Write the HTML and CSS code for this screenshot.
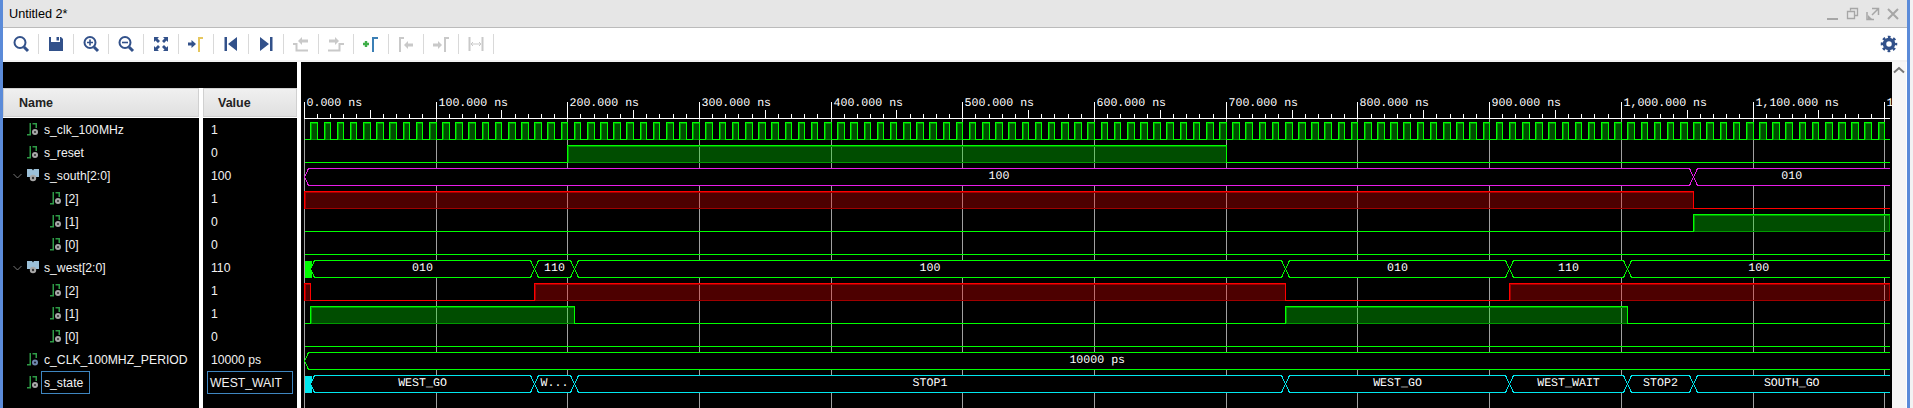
FILE: index.html
```html
<!DOCTYPE html>
<html lang="en">
<head>
    <meta charset="UTF-8">
    <title>Untitled 2*</title>
    <link rel="stylesheet" href="styles.css">
</head>
<body>

    <svg class="defs" width="0" height="0">
        <symbol id="sig" viewBox="0 0 12 15">
            <path d="M0 12h2.500V1H4v12.500H0z" fill="#2e9a46"/>
            <path d="M5.500 1H10v5H8.500V2.500h-3z" fill="#2e9a46"/>
            <circle cx="8" cy="10" r="3" fill="#a8a8a8"/>
            <circle cx="8" cy="10" r="1.100" fill="#333"/>
        </symbol>
        <symbol id="const" viewBox="0 0 12 15">
            <path d="M0 12h2.500V1H4v12.500H0z" fill="#2e9a46"/>
            <path d="M5.500 1H10v5H8.500V2.500h-3z" fill="#2e9a46"/>
            <circle cx="8" cy="10.500" r="3" fill="#6f86ad"/>
            <circle cx="8" cy="10.500" r="1.100" fill="#223"/>
        </symbol>
        <symbol id="bus" viewBox="0 0 12 15">
            <path d="M0 1h5l1 1.500L7 1h5v8H9v2H3V9H0z" fill="#9cc0d8"/>
            <circle cx="6" cy="10" r="3.200" fill="#a8a8a8"/>
            <circle cx="6" cy="10" r="1.200" fill="#333"/>
        </symbol>
        <symbol id="caret" viewBox="0 0 9 6">
            <path d="M.5 1 4.500 5 8.500 1" fill="none" stroke="#777" stroke-width="1"/>
        </symbol>
    </svg>

    <div class="window">
        <div class="titlebar">
            <span class="title">Untitled 2*</span>
            <div class="win-controls">
                <svg width="14" height="14" viewBox="0 0 14 14"><path d="M1 12h11" stroke="currentColor" stroke-width="2"/></svg>
                <svg width="14" height="14" viewBox="0 0 14 14"><path d="M4.500 3.500V1.500h7v7h-3M1.500 4.500h7v7h-7z" fill="none" stroke="currentColor" stroke-width="1.300"/></svg>
                <svg width="14" height="14" viewBox="0 0 14 14"><path d="M6 1.500h6.500V8M1 5v7.500h7M12 2 6 8" fill="none" stroke="currentColor" stroke-width="1.500"/><path d="M2 12V8l4 4z" fill="currentColor"/></svg>
                <svg width="14" height="14" viewBox="0 0 14 14"><path d="M2 2l10 10M12 2 2 12" stroke="currentColor" stroke-width="2"/></svg>
            </div>
        </div>

        <div class="toolbar">
            <button class="tool"><svg width="18" height="18" viewBox="0 0 18 18"><circle cx="8" cy="7.500" r="5.500" fill="none" stroke="currentColor" stroke-width="2"/><path d="M12 12l4 4" stroke="currentColor" stroke-width="3"/></svg></button>
            <button class="tool"><svg width="18" height="18" viewBox="0 0 18 18"><path d="M2 2h2v5h9V2h1l2 2v12H2z" fill="currentColor"/><path d="M9.500 2H12v3.500H9.500z" fill="currentColor"/></svg></button>
            <button class="tool"><svg width="18" height="18" viewBox="0 0 18 18"><circle cx="8" cy="7.500" r="5.500" fill="none" stroke="currentColor" stroke-width="2"/><path d="M12 12l4 4" stroke="currentColor" stroke-width="3"/><path d="M5 7.500h6M8 4.500v6" stroke="currentColor" stroke-width="1.600"/></svg></button>
            <button class="tool"><svg width="18" height="18" viewBox="0 0 18 18"><circle cx="8" cy="7.500" r="5.500" fill="none" stroke="currentColor" stroke-width="2"/><path d="M12 12l4 4" stroke="currentColor" stroke-width="3"/><path d="M5 7.500h6" stroke="currentColor" stroke-width="1.600"/></svg></button>
            <button class="tool"><svg width="18" height="18" viewBox="0 0 18 18"><path d="M2 2h5L5.500 3.500l2.500 2.500-2 2-2.500-2.500L2 7zM16 2v5l-1.500-1.500L12 8l-2-2 2.500-2.500L11 2zM2 16v-5l1.500 1.500L6 10l2 2-2.500 2.500L7 16zM16 16h-5l1.500-1.500L10 12l2-2 2.500 2.500L16 11z" fill="currentColor"/></svg></button>
            <button class="tool"><svg width="18" height="18" viewBox="0 0 18 18"><path d="M1 7.500h3.500V5L9 9l-4.500 4v-2.500H1z" fill="currentColor"/><path d="M11 2h5v2h-3v13h-2z" fill="#e6c75f"/></svg></button>
            <button class="tool"><svg width="18" height="18" viewBox="0 0 18 18"><path d="M2.500 2H5v14H2.500zM15 2v14L6 9z" fill="currentColor"/></svg></button>
            <button class="tool"><svg width="18" height="18" viewBox="0 0 18 18"><path d="M3 2v14l9-7zM13 2h2.500v14H13z" fill="currentColor"/></svg></button>
            <button class="tool off"><svg width="18" height="18" viewBox="0 0 18 18"><path d="M1 9h3.500v6.500H16" fill="none" stroke="currentColor" stroke-width="2"/><path d="M6 6l4-4v2.500h6v3h-6V10z" fill="currentColor"/></svg></button>
            <button class="tool off"><svg width="18" height="18" viewBox="0 0 18 18"><path d="M1 15.500h11.500V9H17" fill="none" stroke="currentColor" stroke-width="2"/><path d="M12 6 8 2v2.500H2v3h6V10z" fill="currentColor"/></svg></button>
            <button class="tool"><svg width="18" height="18" viewBox="0 0 18 18"><path d="M1 9h6M4 6v6" stroke="#3fae49" stroke-width="2.400"/><path d="M10 2h6v2h-4v13h-2z" fill="#3b7fb5"/></svg></button>
            <button class="tool off"><svg width="18" height="18" viewBox="0 0 18 18"><path d="M2 2h5v2H4v13H2z" fill="currentColor"/><path d="M7 10l4-4v2.500h5v3h-5V14z" fill="currentColor"/></svg></button>
            <button class="tool off"><svg width="18" height="18" viewBox="0 0 18 18"><path d="M1 8.500h5V6l4 4-4 4v-2.500H1z" fill="currentColor"/><path d="M12 2h5v2h-3v13h-2z" fill="currentColor"/></svg></button>
            <button class="tool off"><svg width="18" height="18" viewBox="0 0 18 18"><path d="M2.500 2v14M15.500 2v14" stroke="currentColor" stroke-width="2"/><path d="M4 9h10M6 7 4 9l2 2M12 7l2 2-2 2" fill="none" stroke="currentColor" stroke-width="1"/></svg></button>
            <button class="gear"><svg width="18" height="18" viewBox="0 0 18 18"><circle cx="9" cy="9" r="4.500" fill="none" stroke="currentColor" stroke-width="3.500"/><circle cx="9" cy="9" r="7" fill="none" stroke="currentColor" stroke-width="2.500" stroke-dasharray="2.750 2.750" stroke-dashoffset="1.400"/></svg></button>
        </div>

        <div class="panels">
            <div class="signals">
                <div class="band"></div>
                <div class="table">
                    <div class="col-head name-head">Name</div>
                    <div class="col-head value-head">Value</div>

                    <div class="name-cell"><i class="caret-slot"></i><svg class="icon"><use href="#sig"/></svg><span>s_clk_100MHz</span></div>
                    <div class="value-cell">1</div>

                    <div class="name-cell"><i class="caret-slot"></i><svg class="icon"><use href="#sig"/></svg><span>s_reset</span></div>
                    <div class="value-cell">0</div>

                    <div class="name-cell"><i class="caret-slot"><svg class="caret"><use href="#caret"/></svg></i><svg class="icon"><use href="#bus"/></svg><span>s_south[2:0]</span></div>
                    <div class="value-cell">100</div>

                    <div class="name-cell child"><i class="caret-slot"></i><svg class="icon"><use href="#sig"/></svg><span>[2]</span></div>
                    <div class="value-cell">1</div>

                    <div class="name-cell child"><i class="caret-slot"></i><svg class="icon"><use href="#sig"/></svg><span>[1]</span></div>
                    <div class="value-cell">0</div>

                    <div class="name-cell child"><i class="caret-slot"></i><svg class="icon"><use href="#sig"/></svg><span>[0]</span></div>
                    <div class="value-cell">0</div>

                    <div class="name-cell"><i class="caret-slot"><svg class="caret"><use href="#caret"/></svg></i><svg class="icon"><use href="#bus"/></svg><span>s_west[2:0]</span></div>
                    <div class="value-cell">110</div>

                    <div class="name-cell child"><i class="caret-slot"></i><svg class="icon"><use href="#sig"/></svg><span>[2]</span></div>
                    <div class="value-cell">1</div>

                    <div class="name-cell child"><i class="caret-slot"></i><svg class="icon"><use href="#sig"/></svg><span>[1]</span></div>
                    <div class="value-cell">1</div>

                    <div class="name-cell child"><i class="caret-slot"></i><svg class="icon"><use href="#sig"/></svg><span>[0]</span></div>
                    <div class="value-cell">0</div>

                    <div class="name-cell"><i class="caret-slot"></i><svg class="icon"><use href="#const"/></svg><span>c_CLK_100MHZ_PERIOD</span></div>
                    <div class="value-cell">10000 ps</div>

                    <div class="name-cell"><i class="caret-slot"></i><svg class="icon"><use href="#sig"/></svg><span class="selected name-selected">s_state</span></div>
                    <div class="value-cell"><span class="selected value-selected">WEST_WAIT</span></div>

                    <div class="name-cell"></div>
                    <div class="value-cell"></div>
                </div>
            </div>

            <svg id="wave" class="wave" width="1591" height="346" viewBox="301 62 1591 346"></svg>

            <div class="scrollbar">
                <svg width="12" height="8" viewBox="0 0 12 8"><path d="M1 6.500 6 2l5 4.500" fill="none" stroke="#777" stroke-width="2"/></svg>
            </div>
        </div>
    </div>

    <script src="waveform.js"></script>

</body>
</html>
```

FILE: styles.css
```css
body {
    margin: 0;
    background: #f2f2f2;
    font-family: 'Liberation Sans', Arial, sans-serif;
    overflow: hidden;
}

.defs {
    position: absolute;
}

.window {
    display: flex;
    flex-direction: column;
    height: 408px;
    width: 1910px;
    box-sizing: border-box;
    border-left: 3px solid #5b8bd9;
    border-right: 3px solid #5b8bd9;
}

/* title bar */
.titlebar {
    display: flex;
    align-items: center;
    justify-content: space-between;
    height: 27px;
    background: #e6e6e6;
    border-bottom: 1px solid #bbb;
}

.title {
    margin-left: 6px;
    font-size: 12.7px;
    color: #000;
}

.win-controls {
    display: flex;
    gap: 6px;
    padding-right: 7px;
    color: #a6a6a6;
}

/* toolbar */
.toolbar {
    display: flex;
    align-items: center;
    height: 32px;
    padding-left: 1px;
    background: #fff;
}

.tool {
    display: flex;
    align-items: center;
    justify-content: center;
    width: 35px;
    height: 20px;
    padding: 0;
    background: none;
    border: none;
    border-right: 1px solid #d9d9d9;
    color: #32518a;
}

.tool.off {
    color: #c9c9c9;
}

.gear {
    display: flex;
    margin-left: auto;
    margin-right: 9px;
    padding: 0;
    background: none;
    border: none;
    color: #32518a;
}

/* signal list + waves */
.panels {
    display: flex;
    height: 346px;
    margin-top: 2px;
    background: #fff;
}

.signals {
    display: flex;
    flex-direction: column;
    width: 294px;
    margin-right: 4px;
}

.band {
    height: 26px;
    background: #000;
}

.table {
    flex: 1;
    display: grid;
    grid-template-columns: 196px 94px;
    grid-template-rows: 30px repeat(12, 23px) 1fr;
    column-gap: 4px;
}

.col-head {
    display: flex;
    align-items: center;
    box-sizing: border-box;
    height: 29px;
    font-size: 12.5px;
    font-weight: bold;
    color: #222;
    background: linear-gradient(#f0f0f0, #e0e0e0);
    border: 1px solid #d0d0d0;
}

.name-head {
    padding-left: 15px;
}

.value-head {
    padding-left: 14px;
}

.name-cell,
.value-cell {
    display: flex;
    align-items: center;
    font-size: 12.2px;
    color: #f2f2f2;
    background: #000;
}

.name-cell {
    padding-left: 10px;
}

.value-cell {
    padding-left: 8px;
}

.caret-slot {
    display: flex;
    width: 14px;
}

.caret {
    width: 9px;
    height: 6px;
}

.icon {
    width: 12px;
    height: 15px;
    margin-right: 5px;
}

.child .icon {
    margin-left: 23px;
    margin-right: 3px;
}

.selected {
    display: flex;
    align-items: center;
    align-self: stretch;
    box-sizing: border-box;
    border: 1px solid #3f86c0;
    padding-left: 2px;
}

.name-selected {
    width: 49px;
    margin-left: -3px;
}

.value-selected {
    flex: 1;
    margin-left: -4px;
    margin-right: 4px;
}

.wave {
    display: block;
    background: #000;
}

.wave text {
    font-family: 'Liberation Mono', 'Courier New', monospace;
    font-size: 11.6px;
    fill: #fff;
    text-rendering: geometricPrecision;
}

.scrollbar {
    display: flex;
    justify-content: center;
    align-items: flex-start;
    width: 14px;
    padding-top: 4px;
    box-sizing: border-box;
    background: #f6f6f6;
}
```

FILE: waveform.js
```js
const svg = document.getElementById('wave');
const END = 1890;
const GREEN = '#00ff00', RED = '#ff0000', MAGENTA = '#e81ce8', CYAN = '#00e8f0';

function x(t) {
    return Math.min(Math.floor(304.3 + 1.317 * t) + 0.5, END);
}
function rowTop(row) { return 122.5 + 23 * row; }

let out = '';

function line(d, color) {
    out += `<path d="${d}" fill="none" stroke="${color}" shape-rendering="crispEdges"/>`;
}

// grid lines and ruler
for (let t = 0; t <= 1200; t += 100) {
    line(`M${x(t)} 118V408`, '#a0a0a0');
}
line(`M304 118.5H${END}`, '#fff');
for (let t = 0; t <= 1200; t += 10) {
    const h = t % 100 === 0 ? 16 : t % 50 === 0 ? 8 : 4;
    line(`M${x(t)} ${118 - h}V118`, '#fff');
}
for (let t = 0; t <= 1200; t += 100) {
    const label = t >= 1000 ? `1,${String(t - 1000).padStart(3, '0')}.000 ns` : `${t}.000 ns`;
    out += `<text x="${x(t) + 2}" y="106">${label}</text>`;
}

// highs is a list of [from, to] in ns, to = null runs off the end
function bit(row, highs, color, dark, fill) {
    const hi = rowTop(row), lo = hi + 17;
    let d = `M${x(0)} ${lo}`;
    highs.forEach(([a, b]) => {
        const xa = x(a), xb = b === null ? END : x(b);
        out += `<rect x="${xa + 1}" y="${hi + 1}" width="${xb - xa - (b === null ? 2 : 1)}" height="16" fill="${fill}" stroke="${dark}" shape-rendering="crispEdges"/>`;
        d += `H${xa}V${hi}H${xb}` + (b === null ? '' : `V${lo}`);
    });
    if (!highs.length || highs[highs.length - 1][1] !== null) d += `H${END}`;
    line(d, color);
}
const greenBit = (row, highs) => bit(row, highs, GREEN, '#009a00', 'rgba(0,255,0,0.3)');
const redBit = (row, highs) => bit(row, highs, RED, '#a00000', 'rgba(255,0,0,0.3)');

// segments is a list of [from, to, label]
function bus(row, segments, color) {
    const hi = rowTop(row), lo = hi + 17, mid = hi + 8.5;
    segments.forEach(([a, b, label]) => {
        const xa = x(a), xb = b === null ? END : x(b);
        const shape = b === null
            ? `M${xa} ${mid}L${xa + 4} ${hi}H${xb}V${lo}H${xa + 4}Z`
            : `M${xa} ${mid}L${xa + 4} ${hi}H${xb - 4}L${xb} ${mid}L${xb - 4} ${lo}H${xa + 4}Z`;
        out += `<path d="${shape}" fill="#000"/>`;
        const edge = b === null
            ? `M${xb} ${hi}H${xa + 4}L${xa} ${mid}L${xa + 4} ${lo}H${xb}`
            : shape;
        out += `<path d="${edge}" fill="none" stroke="${color}" shape-rendering="crispEdges"/>`;
        out += `<text x="${(xa + xb) / 2}" y="${hi + 10.5}" text-anchor="middle">${label}</text>`;
    });
}
function unknownBlock(row, color) {
    out += `<rect x="${x(0)}" y="${rowTop(row)}" width="7" height="17" fill="${color}" shape-rendering="crispEdges"/>`;
}

// s_clk_100MHz: 10 ns period
const clk = [];
for (let t = 5; t < 1200; t += 10) clk.push([t, t + 5]);
greenBit(0, clk);
greenBit(1, [[200, 700]]);

bus(2, [[0, 1055, '100'], [1055, null, '010']], MAGENTA);
redBit(3, [[0, 1055]]);
greenBit(4, [[1055, null]]);
greenBit(5, []);

unknownBlock(6, GREEN);
bus(6, [[5, 175, '010'], [175, 205, '110'], [205, 745, '100'], [745, 915, '010'], [915, 1005, '110'], [1005, null, '100']], GREEN);
redBit(7, [[0, 5], [175, 745], [915, null]]);
greenBit(8, [[5, 205], [745, 1005]]);
greenBit(9, []);

bus(10, [[0, null, '10000 ps']], GREEN);

unknownBlock(11, CYAN);
bus(11, [[5, 175, 'WEST_GO'], [175, 205, 'W...'], [205, 745, 'STOP1'], [745, 915, 'WEST_GO'], [915, 1005, 'WEST_WAIT'], [1005, 1055, 'STOP2'], [1055, null, 'SOUTH_GO']], CYAN);

svg.innerHTML = out;
```
